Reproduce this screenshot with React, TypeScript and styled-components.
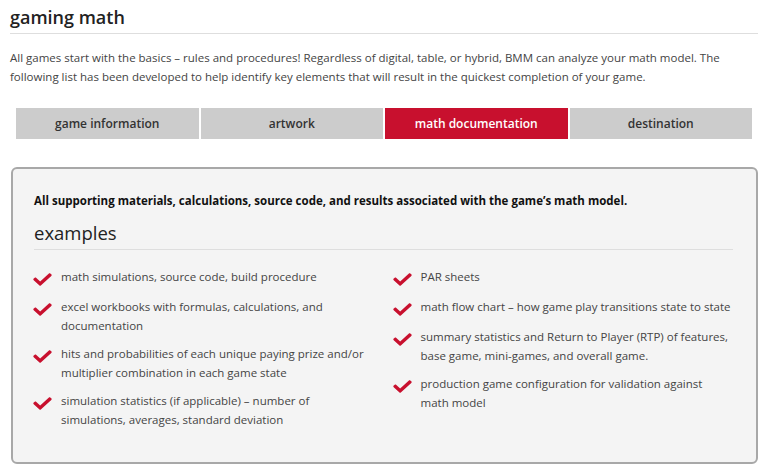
import styled, { createGlobalStyle } from 'styled-components';
import { FaCheck } from 'react-icons/fa';

const GlobalStyle = createGlobalStyle`
  body {
    margin: 0;
    background: #fff;
    font-family: 'Open Sans', 'Liberation Sans', sans-serif;
    color: #444;
  }
`;

const TABS = ['game information', 'artwork', 'math documentation', 'destination'];

const LEFT_ITEMS = [
  'math simulations, source code, build procedure',
  'excel workbooks with formulas, calculations, and documentation',
  'hits and probabilities of each unique paying prize and/or multiplier combination in each game state',
  'simulation statistics (if applicable) – number of simulations, averages, standard deviation',
];

const RIGHT_ITEMS = [
  'PAR sheets',
  'math flow chart – how game play transitions state to state',
  'summary statistics and Return to Player (RTP) of features, base game, mini-games, and overall game.',
  'production game configuration for validation against math model',
];

const App = () => {
  return (
    <Page>
      <GlobalStyle />
      <Title>gaming math</Title>
      <Intro>
        All games start with the basics – rules and procedures! Regardless of digital, table, or hybrid, BMM can
        analyze your math model. The following list has been developed to help identify key elements that will
        result in the quickest completion of your game.
      </Intro>
      <TabBar>
        {TABS.map(tab => (
          <Tab key={tab} active={tab === 'math documentation'}>
            {tab}
          </Tab>
        ))}
      </TabBar>
      <Panel>
        <Lead>All supporting materials, calculations, source code, and results associated with the game’s math model.</Lead>
        <SubTitle>examples</SubTitle>
        <Columns>
          {[LEFT_ITEMS, RIGHT_ITEMS].map((items, i) => (
            <List key={i}>
              {items.map(item => (
                <Item key={item}>
                  <CheckIcon>
                    <FaCheck />
                  </CheckIcon>
                  <span>{item}</span>
                </Item>
              ))}
            </List>
          ))}
        </Columns>
      </Panel>
    </Page>
  );
};

const Page = styled.div`
  padding: 5px 12px 12px 10px;
  width: 770px;
  box-sizing: border-box;
`;

const Title = styled.h1`
  margin: 0;
  padding-bottom: 4px;
  border-bottom: 1px solid #dedede;
  color: #222;
  font-size: 18px;
  font-weight: 600;
  line-height: 24px;
`;

const Intro = styled.p`
  margin: 14px 0 0;
  font-size: 11.5px;
  line-height: 19px;
  color: #444;
`;

const TabBar = styled.div`
  display: grid;
  grid-template-columns: repeat(4, 1fr);
  gap: 2px;
  margin: 22px 6px 0;
`;

const Tab = styled.div<{ active?: boolean }>`
  display: flex;
  align-items: center;
  justify-content: center;
  height: 31px;
  background: ${({ active }) => (active ? '#c8102e' : '#cccccc')};
  color: ${({ active }) => (active ? '#fff' : '#333')};
  font-size: 12px;
  font-weight: 600;
`;

const Panel = styled.div`
  margin: 28px 0 0 1px;
  padding: 23px 23px 24px 21px;
  border: 2px solid #a8a8a8;
  border-radius: 6px;
  background: #f4f4f4;
`;

const Lead = styled.p`
  margin: 0;
  color: #111;
  font-size: 11.5px;
  font-weight: 700;
  line-height: 18px;
`;

const SubTitle = styled.h2`
  margin: 11px 0 0;
  padding-bottom: 4px;
  border-bottom: 1px solid #dedede;
  color: #222;
  font-size: 18.5px;
  font-weight: 400;
  line-height: 24px;
`;

const Columns = styled.div`
  display: grid;
  grid-template-columns: 1fr 1fr;
  column-gap: 20px;
  margin-top: 17px;
`;

const List = styled.ul`
  margin: 0;
  padding: 0;
  list-style: none;
`;

const Item = styled.li`
  display: flex;
  align-items: flex-start;
  margin-bottom: 9px;
  font-size: 11.5px;
  line-height: 19px;
  color: #444;
`;

const CheckIcon = styled.span`
  display: flex;
  flex: 0 0 27px;
  padding-top: 4px;
  color: #c8102e;
  font-size: 17px;

  svg {
    transform: scaleX(1.1);
  }
`;

export default App;
